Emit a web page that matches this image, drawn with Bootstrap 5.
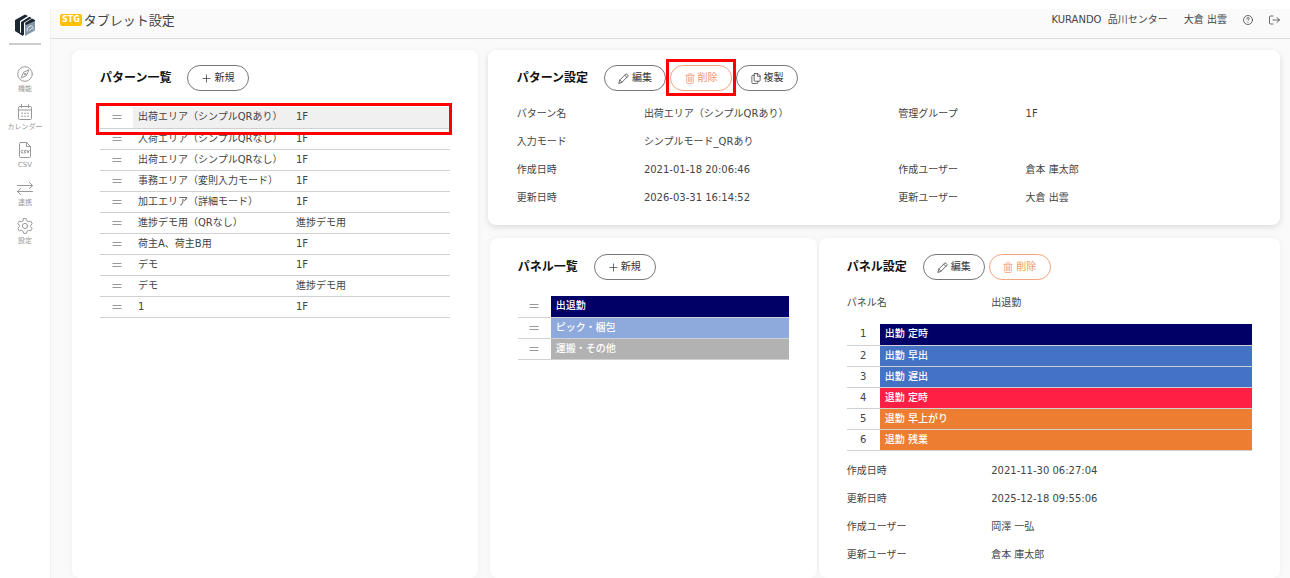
<!DOCTYPE html>
<html lang="ja">
<head>
<meta charset="utf-8">
<meta name="viewport" content="width=device-width, initial-scale=1">
<title>タブレット設定</title>
<link href="https://cdn.jsdelivr.net/npm/bootstrap@5.3.0/dist/css/bootstrap.min.css" rel="stylesheet">
<style>
body { font-family: "DejaVu Sans", "Noto Sans CJK JP", sans-serif; font-size: 10px; line-height: 20px; color: #444; background: #fff; }
svg { fill: none; stroke: currentColor; stroke-linecap: round; stroke-linejoin: round; flex: none; }
a { color: inherit; text-decoration: none; }
.side { width: 50px; flex: none; padding-top: 14px; }
.side hr { width: 32px; margin: 7px 0 21px; border-top: 2px solid #ccc; }
.side-link { height: 38px; font-size: 7px; line-height: 14px; color: #999; white-space: nowrap; }
.workspace { margin-top: 9px; background: #fafafa; border-left: 1px solid #f0f0f0; min-width: 0; }
.topbar { height: 30px; padding: 0 10px 7px 9px; border-bottom: 1px solid #ddd; }
.topbar h1 { font-size: 13px; line-height: 20px; font-family: "Noto Sans CJK JP", sans-serif; font-weight: 400; margin: 0 0 0 2px; }
.stg { font-size: 8px; line-height: 12px; padding: 0 2px; border-radius: 2px; background: #ffc107; color: #fff; font-weight: 700; }
.panes { display: grid; grid-template-columns: 406fr 793fr; gap: 10px; padding: 11px 10px 0 21px; }
.subpanes { display: grid; grid-template-columns: 327fr 461fr; gap: 2px; padding: 13px 0 0 2px; }
.pane { background: #fff; border-radius: 8px; box-shadow: 0 0 6px rgba(0,0,0,.05); padding: 16px 0 0 28px; min-width: 0; }
.pane-info { box-shadow: 0 2px 6px rgba(0,0,0,.13); padding: 15px 0 13px 29px; }
.pane h2 { font-size: 12px; line-height: 24px; font-weight: 700; color: #111; margin: 0 12px 0 0; }
.pane-list { padding-top: 15px; }
.pill { height: 26px; min-width: 62px; border: 1px solid #777; border-radius: 13px; background: #fff; color: #333; padding: 0 13px; gap: 3px; font-size: 10px; line-height: 20px; }
.pill svg { stroke-width: .8; }
.pill-danger { color: #f0936a; border-color: #f3a581; }
.marker { position: absolute; border: 3px solid #f00; pointer-events: none; }
.marker-btn { inset: -6px -4px -5px; }
.marker-row { inset: -4px -2px auto -4px; height: 32px; }
.grid-table { width: 100%; table-layout: fixed; }
.grid-table td { height: 21px; padding: 0 0 0 5px; line-height: 20px; border-bottom: 1px solid #d0d0d0; white-space: nowrap; }
.grid-table td:first-child { width: 33px; padding: 0; text-align: center; }
.grid-table svg { color: #999; vertical-align: 0; }
.grid-table .is-current { background: #f0f0f0; }
.pane .framed { margin-right: 28px; }
.swatches td:last-child { color: #fff; font-weight: 500; }
.navy { background: #006; } .sky { background: #8ea9db; } .silver { background: #b2b2b2; }
.blue { background: #4472c4; } .red { background: #ff1f44; } .orange { background: #ed7d31; }
.facts { margin: 0; line-height: 28px; }
.facts dt, .facts dd { padding: 0; margin: 0; font-weight: 400; white-space: nowrap; min-height: 28px; }
.pane-info .facts { padding-top: 1px; }
.panel-name { padding: 1px 0 7px; }
.panel-meta { padding-top: 6px; }
</style>
</head>
<body>
<svg width="0" height="0" class="position-absolute" aria-hidden="true">
  <symbol id="i-plus" viewBox="0 0 10 10"><path d="M5 1v8M1 5h8"/></symbol>
  <symbol id="i-pen" viewBox="0 0 12 12"><path d="M1 11l1-3.400L8.300 1.300q.7-.6 1.400 0l1 1q.6.7 0 1.400L4.400 10zM7.300 2.300l2.400 2.400M2 7.700L4.300 10"/></symbol>
  <symbol id="i-trash" viewBox="0 0 10 12"><path d="M.5 2.500h9M3.500 2.500v-1q0-1 1-1h1q1 0 1 1v1M1.500 2.500v8q0 1 1 1h5q1 0 1-1v-8M3.500 4.500v5M5 4.500v5M6.500 4.500v5"/></symbol>
  <symbol id="i-copy" viewBox="0 0 10 12"><path d="M3.500.5h3.500l2.500 2.500v5q0 1-1 1h-4.500q-1 0-1-1v-6.500q0-1 .5-1zM6.500.5v3h3M3 2.500h-1.500q-1 0-1 1v7q0 1 1 1h4.500q1 0 1-1v-1.500"/></symbol>
  <symbol id="i-grip" viewBox="0 0 10 6"><path d="M.5 1.500h9M.5 4.500h9" stroke-linecap="butt"/></symbol>
</svg>
<div class="d-flex min-vh-100">
  <nav class="side d-flex flex-column align-items-center" aria-label="メイン">
    <a href="#" aria-label="ホーム"><svg class="d-block" width="20" height="22" viewBox="0 0 20 22" stroke="none">
      <path fill="#1b2733" stroke="none" d="M0 6L10 .5l3 1.500L5 7v11.500L8 20v2L0 17zM6 8l8.500-5.300 2.200 1.200L9 8.700V21.500L6 19z"/>
      <path fill="#1b2733" stroke="none" d="M10 9l7-4.500L20 6v3l-9 5z"/>
      <path fill="#8797aa" stroke="none" d="M10 11.500L20 7v9.500l-10 5.500z"/>
      <path stroke="#e5ebf1" d="M12 17q0-4 3-5t3 3M14.500 16.500l2-2"/></svg></a>
    <hr class="opacity-100">
    <a class="side-link d-flex flex-column align-items-center" href="#"><svg width="16" height="16" viewBox="0 0 16 16"><circle cx="8" cy="8" r="7.300"/><path d="M11.800 4.200L9.500 9.500l-5.300 2.300 2.300-5.300z"/><circle cx="8" cy="8" r=".8"/></svg>機能</a>
    <a class="side-link d-flex flex-column align-items-center" href="#"><svg width="16" height="16" viewBox="0 0 16 16"><rect x="1.500" y="2.500" width="13" height="13" rx="1"/><path d="M1.500 6h13M4.500.5v3M11.500.5v3"/><path stroke-width="1.600" d="M5 9.300h.1M8 9.300h.1M11 9.300h.1M5 12.300h.1M8 12.300h.1M11 12.300h.1"/></svg>カレンダー</a>
    <a class="side-link d-flex flex-column align-items-center" href="#"><svg width="16" height="16" viewBox="0 0 16 16"><path d="M3.500.5h6l4 4v10q0 1-1 1h-9q-1 0-1-1v-13q0-1 1-1zM9.500.5v4h4M6 8.500q-2-.8-2 1.200t2 1.300M8.800 8.500q-1.500-.5-1.500.5t1.300.9q.9 1-1.300 1.100M10 8.500l1 2.500 1-2.500"/></svg>CSV</a>
    <a class="side-link d-flex flex-column align-items-center" href="#"><svg width="16" height="16" viewBox="0 0 16 16"><path d="M.5 5.500h15M12.500 2.500l3 3-3 3M15.500 11.500H.5M3.500 8.500l-3 3 3 3"/></svg>連携</a>
    <a class="side-link d-flex flex-column align-items-center" href="#"><svg width="16" height="16" viewBox="0 0 16 16"><path d="M6.500.7h3l.5 2.100 1.600.9 2.100-.6 1.500 2.600L13.700 7.200v1.600l1.500 1.500-1.500 2.600-2.100-.6-1.600.9-.5 2.100h-3L6 13.200l-1.600-.9-2.100.6L.8 10.300l1.500-1.500V7.200L.8 5.700l1.500-2.600 2.100.6L6 2.800z"/><circle cx="8" cy="8" r="2.600"/></svg>設定</a>
  </nav>
  <div class="workspace flex-fill d-flex flex-column">
    <header class="topbar d-flex align-items-center">
      <span class="stg">STG</span>
      <h1>タブレット設定</h1>
      <div class="ms-auto d-flex align-items-center gap-3">
        <span>KURANDO&nbsp; 品川センター</span>
        <span>大倉 出雲</span>
        <a href="#" class="d-flex" aria-label="ヘルプ"><svg width="10" height="10" viewBox="0 0 10 10" stroke-width=".8"><circle cx="5" cy="5" r="4.500"/><path d="M3.700 4q0-1.400 1.300-1.400t1.300 1.200Q6.300 4.600 5 5.500M5 7.200v.1"/></svg></a>
        <a href="#" class="d-flex" aria-label="ログアウト"><svg width="11" height="10" viewBox="0 0 11 10" stroke-width=".8"><path d="M4 1H1.500q-1 0-1 1v6q0 1 1 1H4M4 5h6.500M8 2.500L10.500 5 8 7.500"/></svg></a>
      </div>
    </header>
    <main class="panes flex-fill">
      <section class="pane pane-list">
        <div class="d-flex align-items-center gap-1"><h2>パターン一覧</h2><button type="button" class="pill d-flex align-items-center justify-content-center"><svg width="9" height="9"><use href="#i-plus"/></svg>新規</button></div>
        <div class="position-relative framed mt-3">
          <table class="grid-table">
            <colgroup><col style="width:33px"><col style="width:158px"><col></colgroup>
            <tbody>
            <tr><td><svg width="10" height="6"><use href="#i-grip"/></svg></td><td class="is-current">出荷エリア（シンプルQRあり）</td><td class="is-current">1F</td></tr>
            <tr><td><svg width="10" height="6"><use href="#i-grip"/></svg></td><td>入荷エリア（シンプルQRなし）</td><td>1F</td></tr>
            <tr><td><svg width="10" height="6"><use href="#i-grip"/></svg></td><td>出荷エリア（シンプルQRなし）</td><td>1F</td></tr>
            <tr><td><svg width="10" height="6"><use href="#i-grip"/></svg></td><td>事務エリア（変則入力モード）</td><td>1F</td></tr>
            <tr><td><svg width="10" height="6"><use href="#i-grip"/></svg></td><td>加工エリア（詳細モード）</td><td>1F</td></tr>
            <tr><td><svg width="10" height="6"><use href="#i-grip"/></svg></td><td>進捗デモ用（QRなし）</td><td>進捗デモ用</td></tr>
            <tr><td><svg width="10" height="6"><use href="#i-grip"/></svg></td><td>荷主A、荷主B用</td><td>1F</td></tr>
            <tr><td><svg width="10" height="6"><use href="#i-grip"/></svg></td><td>デモ</td><td>1F</td></tr>
            <tr><td><svg width="10" height="6"><use href="#i-grip"/></svg></td><td>デモ</td><td>進捗デモ用</td></tr>
            <tr><td><svg width="10" height="6"><use href="#i-grip"/></svg></td><td>1</td><td>1F</td></tr>
            </tbody>
          </table>
          <div class="marker marker-row"></div>
        </div>
      </section>
      <div class="d-flex flex-column">
        <section class="pane pane-info">
          <div class="d-flex align-items-center gap-1 mb-2">
            <h2>パターン設定</h2>
            <button type="button" class="pill d-flex align-items-center justify-content-center"><svg width="11" height="11"><use href="#i-pen"/></svg>編集</button>
            <div class="position-relative"><button type="button" class="pill pill-danger d-flex align-items-center justify-content-center"><svg width="10" height="11"><use href="#i-trash"/></svg>削除</button><div class="marker marker-btn"></div></div>
            <button type="button" class="pill d-flex align-items-center justify-content-center"><svg width="10" height="11"><use href="#i-copy"/></svg>複製</button>
          </div>
          <dl class="facts row g-0">
            <dt class="col-2">パターン名</dt><dd class="col-4">出荷エリア（シンプルQRあり）</dd><dt class="col-2">管理グループ</dt><dd class="col-4">1F</dd>
            <dt class="col-2">入力モード</dt><dd class="col-10">シンプルモード_QRあり</dd>
            <dt class="col-2">作成日時</dt><dd class="col-4">2021-01-18 20:06:46</dd><dt class="col-2">作成ユーザー</dt><dd class="col-4">倉本 庫太郎</dd>
            <dt class="col-2">更新日時</dt><dd class="col-4">2026-03-31 16:14:52</dd><dt class="col-2">更新ユーザー</dt><dd class="col-4">大倉 出雲</dd>
          </dl>
        </section>
        <div class="subpanes flex-fill">
          <section class="pane">
            <div class="d-flex align-items-center gap-1 mb-3"><h2>パネル一覧</h2><button type="button" class="pill d-flex align-items-center justify-content-center"><svg width="9" height="9"><use href="#i-plus"/></svg>新規</button></div>
            <div class="framed"><table class="grid-table swatches"><tbody>
              <tr><td><svg width="10" height="6"><use href="#i-grip"/></svg></td><td class="navy">出退勤</td></tr>
              <tr><td><svg width="10" height="6"><use href="#i-grip"/></svg></td><td class="sky">ピック・梱包</td></tr>
              <tr><td><svg width="10" height="6"><use href="#i-grip"/></svg></td><td class="silver">運搬・その他</td></tr>
            </tbody></table></div>
          </section>
          <section class="pane">
            <div class="d-flex align-items-center gap-1 mb-2">
              <h2>パネル設定</h2>
              <button type="button" class="pill d-flex align-items-center justify-content-center"><svg width="11" height="11"><use href="#i-pen"/></svg>編集</button>
              <button type="button" class="pill pill-danger d-flex align-items-center justify-content-center"><svg width="10" height="11"><use href="#i-trash"/></svg>削除</button>
            </div>
            <dl class="facts panel-name row g-0"><dt class="col-4">パネル名</dt><dd class="col-8">出退勤</dd></dl>
            <div class="framed"><table class="grid-table swatches"><tbody>
              <tr><td>1</td><td class="navy">出勤 定時</td></tr>
              <tr><td>2</td><td class="blue">出勤 早出</td></tr>
              <tr><td>3</td><td class="blue">出勤 遅出</td></tr>
              <tr><td>4</td><td class="red">退勤 定時</td></tr>
              <tr><td>5</td><td class="orange">退勤 早上がり</td></tr>
              <tr><td>6</td><td class="orange">退勤 残業</td></tr>
            </tbody></table></div>
            <dl class="facts panel-meta row g-0">
              <dt class="col-4">作成日時</dt><dd class="col-8">2021-11-30 06:27:04</dd>
              <dt class="col-4">更新日時</dt><dd class="col-8">2025-12-18 09:55:06</dd>
              <dt class="col-4">作成ユーザー</dt><dd class="col-8">岡澤 一弘</dd>
              <dt class="col-4">更新ユーザー</dt><dd class="col-8">倉本 庫太郎</dd>
            </dl>
          </section>
        </div>
      </div>
    </main>
  </div>
</div>
<script src="https://cdn.jsdelivr.net/npm/bootstrap@5.3.0/dist/js/bootstrap.bundle.min.js"></script>
</body>
</html>
